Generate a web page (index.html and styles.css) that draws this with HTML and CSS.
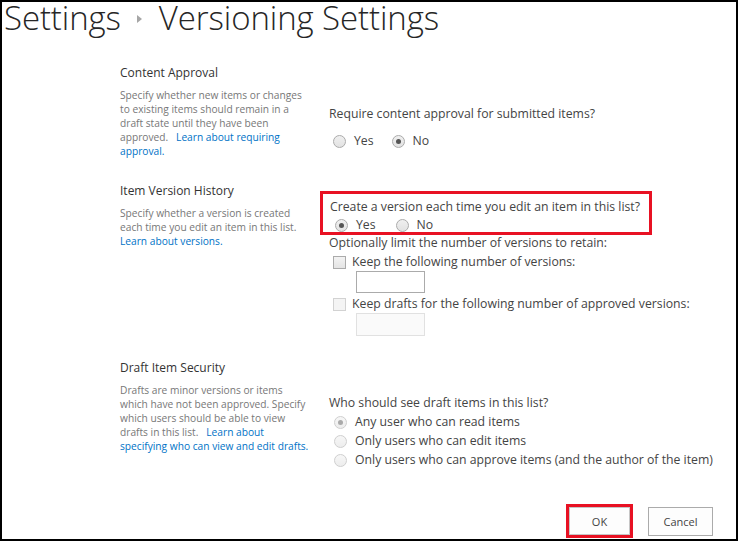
FILE: index.html
```html
<!DOCTYPE html>
<html>
<head>
<meta charset="utf-8">
<link rel="stylesheet" href="styles.css">
</head>
<body>
<div class="frame">
  <h1 class="title"><span>Settings</span><span class="crumb-sep"></span><span>Versioning Settings</span></h1>

  <div class="section s1">
    <div class="info">
      <div class="heading">Content Approval</div>
      <div class="desc">Specify whether new items or changes<br>to existing items should remain in a<br>draft state until they have been<br>approved. &nbsp; <a class="link">Learn about requiring<br>approval.</a></div>
    </div>
    <div class="fields f1">
      <div class="question">Require content approval for submitted items?</div>
      <div class="radio-row">
        <span class="opt"><span class="radio"></span>Yes</span>
        <span class="opt"><span class="radio checked"></span>No</span>
      </div>
    </div>
  </div>

  <div class="section s2">
    <div class="info">
      <div class="heading">Item Version History</div>
      <div class="desc">Specify whether a version is created<br>each time you edit an item in this list.<br><a class="link">Learn about versions.</a></div>
    </div>
    <div class="fields f2">
      <div class="highlight">
        <div class="question">Create a version each time you edit an item in this list?</div>
        <div class="radio-row">
          <span class="opt"><span class="radio checked"></span>Yes</span>
          <span class="opt"><span class="radio"></span>No</span>
        </div>
      </div>
      <div class="question q-limit">Optionally limit the number of versions to retain:</div>
      <div class="check-row"><span class="checkbox"></span>Keep the following number of versions:</div>
      <div class="textbox"></div>
      <div class="check-row disabled"><span class="checkbox"></span>Keep drafts for the following number of approved versions:</div>
      <div class="textbox disabled"></div>
    </div>
  </div>

  <div class="section s3">
    <div class="info">
      <div class="heading">Draft Item Security</div>
      <div class="desc">Drafts are minor versions or items<br>which have not been approved. Specify<br>which users should be able to view<br>drafts in this list. &nbsp; <a class="link">Learn about<br>specifying who can view and edit drafts.</a></div>
    </div>
    <div class="fields f3">
      <div class="question">Who should see draft items in this list?</div>
      <div class="stack-opt"><span class="radio checked dis"></span>Any user who can read items</div>
      <div class="stack-opt"><span class="radio dis"></span>Only users who can edit items</div>
      <div class="stack-opt"><span class="radio dis"></span>Only users who can approve items (and the author of the item)</div>
    </div>
  </div>

  <div class="buttons">
    <div class="ok-wrap"><button class="btn">OK</button></div>
    <button class="btn cancel">Cancel</button>
  </div>
</div>
</body>
</html>
```

FILE: styles.css
```css
* { box-sizing: border-box; }
html, body { margin: 0; padding: 0; background: #fff; }
body { font-family: "Open Sans", "Noto Sans", sans-serif; color: #444; }

.frame {
  width: 738px;
  height: 541px;
  border: 2px solid #000;
  position: relative;
}

.title {
  margin: -3px 0 0 0;
  padding: 0 0 0 2px;
  font-weight: 300;
  font-size: 33px;
  line-height: 38px;
  color: #262626;
  display: flex;
  align-items: center;
  height: 38px;
  letter-spacing: -0.1px;
}
.crumb-sep {
  width: 0; height: 0;
  border-top: 4px solid transparent;
  border-bottom: 4px solid transparent;
  border-left: 5px solid #a6a6a6;
  margin: 2px 17px 0 16px;
}

.section { display: flex; padding-left: 118px; }
.info { width: 209px; flex: none; }
.heading { font-size: 12px; line-height: 16px; color: #333; }
.desc { font-size: 10.2px; line-height: 14px; color: #777; margin-top: 7px; white-space: nowrap; }
.link { color: #0072c6; }

.s1 { margin-top: 28px; }
.s2 { margin-top: 25px; }
.s3 { margin-top: 24px; }

.fields { font-size: 12.25px; }
.question { line-height: 16px; color: #444; }
.f1 { padding-top: 41px; }
.f1 .radio-row { margin-top: 11px; }

.radio-row { display: flex; gap: 18px; line-height: 16px; margin-left: 4px; }
.opt { display: inline-flex; align-items: center; gap: 8px; }
.radio {
  width: 13px; height: 13px; border-radius: 50%;
  border: 1px solid #ababab;
  background: linear-gradient(#f0f0f0, #e2e2e2);
  display: inline-block; position: relative; flex: none;
}
.radio.checked::after {
  content: ""; position: absolute; left: 3px; top: 3px;
  width: 5px; height: 5px; border-radius: 50%; background: #555;
}
.radio.dis { border-color: #cfcfcf; background: linear-gradient(#f7f7f7, #ededed); }
.radio.dis.checked::after { background: #aaa; }

.f2 { padding-top: 8px; margin-left: -9px; }
.highlight {
  width: 332px; height: 44px;
  border: 3px solid #e81123;
  padding: 5px 0 0 7px;
}
.highlight .radio-row { margin-left: 5px; gap: 20px; margin-top: 2px; }
.q-limit { margin-left: 9px; margin-top: 0; }
.check-row { display: flex; align-items: center; gap: 6px; margin-left: 13px; margin-top: 3px; line-height: 16px; }
.checkbox { width: 13px; height: 13px; border: 1px solid #ababab; background: linear-gradient(#f3f3f3, #e4e4e4); flex: none; }
.check-row.disabled .checkbox { border-color: #d2d2d2; background: #f4f4f4; }
.textbox { width: 69px; height: 22px; border: 1px solid #ababab; margin-left: 36px; margin-top: 1px; }
.textbox.disabled { border-color: #e1e1e1; background: #fafafa; height: 23px; margin-top: 1px; }
.check-row.disabled { margin-top: 3px; }

.f3 { padding-top: 35px; }
.stack-opt { display: flex; align-items: center; gap: 8px; margin-left: 5px; line-height: 16px; margin-top: 3px; }
.f3 .stack-opt:first-of-type { margin-top: 1px; }

.buttons {
  position: absolute; right: 23px; bottom: 1px;
  display: flex; align-items: center; gap: 15px;
}
.ok-wrap { border: 3px solid #e81123; width: 67px; height: 34px; display: flex; }
.btn {
  font-family: "Open Sans", "Noto Sans", sans-serif;
  font-size: 11px; color: #444;
  background: #fdfdfd; border: 1px solid #ababab;
  width: 65px; height: 29px; padding: 0;
}
.ok-wrap .btn { width: 100%; height: 100%; border-color: #c6c6c6; }
```
